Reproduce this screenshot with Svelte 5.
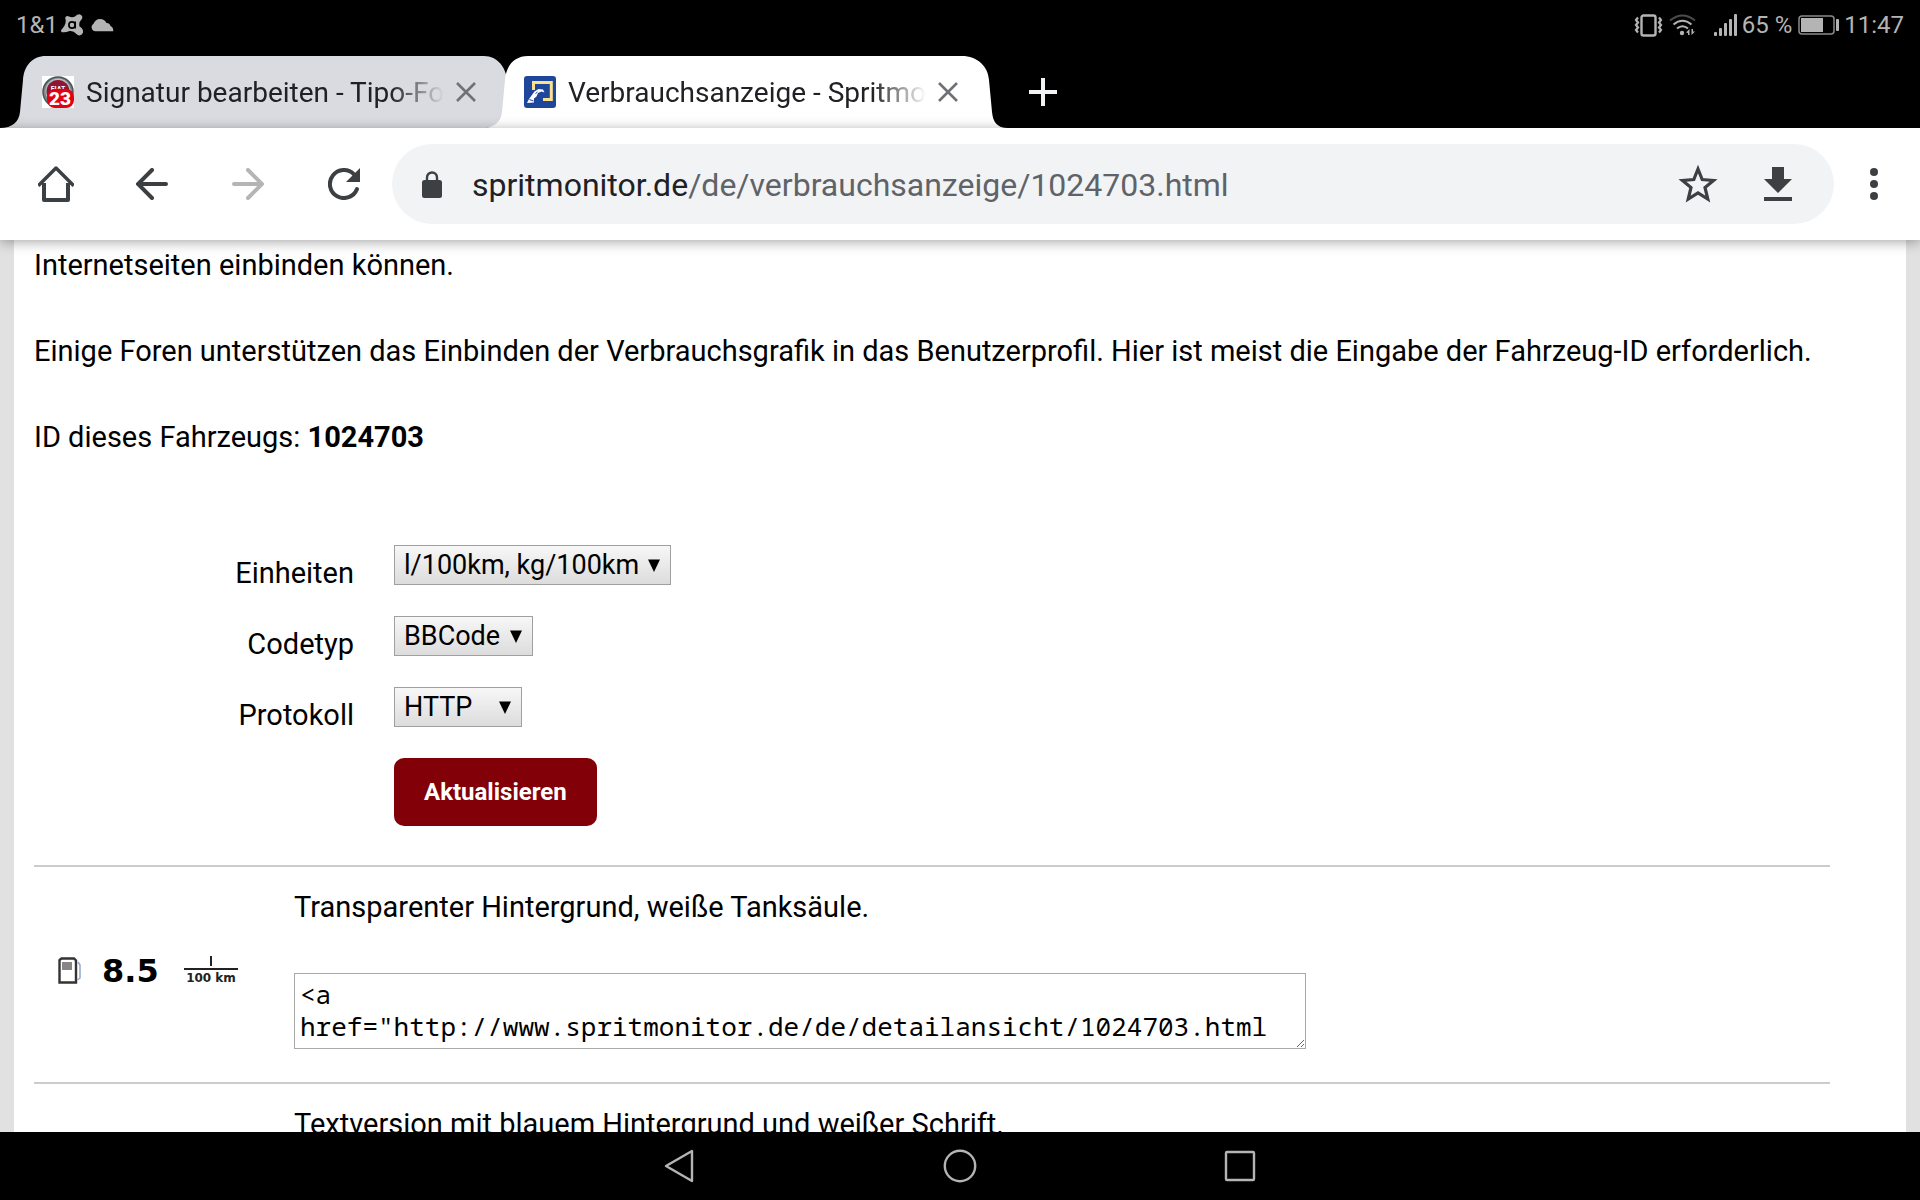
<script>
  let units = $state('l/100km, kg/100km');
  let codeType = $state('BBCode');
  let protocol = $state('HTTP');

  const snippet =
    '<a href="http://www.spritmonitor.de/de/detailansicht/1024703.html" target="_blank">Spritmonitor.de</a>';
</script>

{#snippet closeIcon()}
  <svg width="20" height="20" viewBox="0 0 20 20" fill="none" stroke="#6e7175" stroke-width="2.6">
    <path d="M1 1 19 19M19 1 1 19" />
  </svg>
{/snippet}

{#snippet arrow()}
  <svg class="arrow" width="12" height="13" viewBox="0 0 12 13"><path d="M0 .5H12L6 13Z" /></svg>
{/snippet}

<div class="screen">
  <header class="status">
    <div class="group">
      <span>1&amp;1</span>
      <svg class="avast" width="23" height="23" viewBox="0 0 23 23">
        <path
          fill="#b4b4b4"
          d="M5 2.5Q6 1.5 8 2.5Q11 4 14 2.6Q16 .2 18.500 .2A3.200 3.200 0 0 1 20.500 5.500Q17.500 8 18.500 12.500Q22.500 14.500 22 18.500A3.700 3.700 0 0 1 15.500 20Q12.500 16.500 8.500 17Q5 18.600 1.800 18.300A1.500 1.500 0 0 1 .7 15.600Q4 12 4.500 9Q5 6 4.300 4.500Q4 3.300 5 2.500Z"
        />
        <circle cx="11" cy="11" r="3.100" fill="none" stroke="#000" stroke-width="1.700" />
        <path d="M14.200 7.500V14.500" stroke="#000" stroke-width="1.700" />
      </svg>
      <svg width="23" height="14" viewBox="0 0 23 14">
        <path
          fill="#b4b4b4"
          d="M4.500 13.200A4 4 0 0 1 2.500 5.800Q4.500 1 9 1Q13.500 1 15.500 5Q18.500 4.800 19.500 8Q22.300 9 22.300 13.200Z"
        />
      </svg>
    </div>
    <div class="group">
      <svg width="29" height="23" viewBox="0 0 29 23" fill="none" stroke="#b4b4b4">
        <rect x="7.500" y="1.500" width="14" height="20" rx="2" stroke-width="2.400" />
        <path
          stroke-width="2.200"
          d="M4 3.500 2 6 4 8.500 2 11 4 13.500 2 16 4 18.500M25 3.500 27 6 25 8.500 27 11 25 13.500 27 16 25 18.500"
        />
      </svg>
      <svg class="wifi" width="27" height="23" viewBox="0 0 27 23" fill="none" stroke="#b4b4b4" stroke-width="2">
        <path stroke="#4c4c4c" d="M1 6.500Q13.500-3.500 26 6.500" />
        <path d="M4.500 10.500Q13.500 3 22.500 10.500M8 14.500Q13.500 10 19 14.500" />
        <circle cx="13" cy="19" r="2.200" fill="#b4b4b4" stroke="none" />
        <path fill="#b4b4b4" stroke="none" d="M20.500 15V21H19V19L17 18.500ZM22.500 15V21L26 17.500H24V15Z" />
      </svg>
      <svg width="24" height="23" viewBox="0 0 24 23" fill="#b4b4b4">
        <rect x="0" y="18" width="3" height="4" rx="1" />
        <rect x="5" y="14" width="3" height="8" rx="1" />
        <rect x="10" y="9" width="3" height="13" rx="1" />
        <rect x="15" y="5" width="3" height="17" rx="1" />
        <rect x="20" y="0" width="3" height="22" rx="1" />
      </svg>
      <span class="percent">65 %</span>
      <svg class="battery" width="41" height="20" viewBox="0 0 41 20">
        <rect x="1" y="1" width="35" height="18" rx="3" fill="none" stroke="#8a8a8a" stroke-width="1.500" />
        <rect x="3" y="3" width="22" height="14" fill="#b4b4b4" />
        <rect x="38" y="4" width="3" height="12" rx="1" fill="#b4b4b4" />
      </svg>
      <span>11:47</span>
    </div>
  </header>

  <nav class="tabs" aria-label="Tabs">
    <div class="tab">
      <svg class="shape" viewBox="0 0 512 72" preserveAspectRatio="none" fill="#dadbe0">
        <path d="M0 72C12 72 19 66 20 56L23 24C24 10 32 0 46 0H484C498 0 506 12 507 24L504 56C503 66 496 72 484 72Z" />
      </svg>
      <div class="tab-body">
        <svg class="favicon" width="32" height="32" viewBox="0 0 32 32">
          <rect width="32" height="32" fill="#fff" />
          <circle cx="16" cy="16" r="15" fill="#7c8789" stroke="#4a5557" stroke-width="1.500" />
          <circle cx="16" cy="15" r="12.500" fill="#b9c4c6" />
          <circle cx="16" cy="15.500" r="11.500" fill="#8e1533" />
          <text x="16" y="15" text-anchor="middle" class="fiat">FIAT</text>
          <rect x="5" y="13" width="27" height="19" rx="8" fill="#e30010" />
          <text x="18" y="29" text-anchor="middle" class="count">23</text>
        </svg>
        <span class="title">Signatur bearbeiten - Tipo-Forum</span>
        <button aria-label="Tab schließen">{@render closeIcon()}</button>
      </div>
    </div>
    <div class="tab active">
      <svg class="shape" viewBox="0 0 518 72" preserveAspectRatio="none" fill="#fff">
        <path d="M0 72C12 72 19 66 20 56L23 24C24 10 32 0 46 0H480C495 0 506 10 507 24L510 56C511 66 515 72 526 72Z" />
      </svg>
      <div class="tab-body">
        <svg class="favicon" width="32" height="32" viewBox="0 0 32 32">
          <rect width="32" height="32" rx="3" fill="#1e479b" />
          <path d="M9.500 14V6.500H27.300V23.500H19" fill="none" stroke="#fbe08e" stroke-width="3" />
          <path d="M3 27 5 23 10.500 15.500 14.500 13 19 13.500 20.500 16.500 17.500 15.500 14 17 12.500 20.500 10 22.500V26.500Z" fill="#fff" />
          <path d="M5.500 23.500 9.500 25M11.500 17.500 13.500 16" stroke="#1e479b" stroke-width="1" />
        </svg>
        <span class="title">Verbrauchsanzeige - Spritmonitor</span>
        <button aria-label="Tab schließen">{@render closeIcon()}</button>
      </div>
    </div>
    <button class="new-tab" aria-label="Neuer Tab">
      <svg width="28" height="28" viewBox="0 0 28 28" stroke="#f1f3f4" stroke-width="4">
        <path d="M14 0V28M0 14H28" />
      </svg>
    </button>
  </nav>

  <div class="toolbar">
    <button aria-label="Startseite">
      <svg width="36" height="36" viewBox="0 0 36 36" fill="none" stroke="#3c4043" stroke-width="4" stroke-linejoin="round">
        <path d="M6 17V34H30V17" />
        <path d="M1.500 18.500 18 2 34.500 18.500" stroke-linecap="square" stroke-width="3.500" />
      </svg>
    </button>
    <button aria-label="Zurück">
      <svg width="32" height="32" viewBox="0 0 32 32" fill="none" stroke="#3c4043" stroke-width="4" stroke-linecap="round">
        <path d="M30 16H3M16 2 2 16 16 30" />
      </svg>
    </button>
    <button aria-label="Vorwärts" disabled>
      <svg width="32" height="32" viewBox="0 0 32 32" fill="none" stroke="#b4b5b7" stroke-width="4" stroke-linecap="round">
        <path d="M2 16H29M16 2 30 16 16 30" />
      </svg>
    </button>
    <button aria-label="Neu laden">
      <svg width="32" height="32" viewBox="0 0 32 32" fill="none" stroke="#3c4043" stroke-width="4">
        <path d="M29 21A14 14 0 1 1 26 6.300" stroke-linecap="round" />
        <path d="M32 0V14H18Z" fill="#3c4043" stroke="none" />
      </svg>
    </button>
    <div class="omnibox">
      <svg width="20" height="27" viewBox="0 0 20 27">
        <rect y="9" width="20" height="18" rx="2.500" fill="#3c4043" />
        <path d="M5 10V6.500A5 5 0 0 1 15 6.500V10" fill="none" stroke="#3c4043" stroke-width="2.400" />
      </svg>
      <a class="url" href="#top">spritmonitor.de<span>/de/verbrauchsanzeige/1024703.html</span></a>
      <button aria-label="Lesezeichen">
        <svg width="40" height="38" viewBox="0 0 40 38" fill="none" stroke="#3c4043" stroke-width="3.200">
          <path d="M20 4 24.200 14.500 35.500 15.500 27 22.500 29.800 34 20 28 10.200 34 13 22.500 4.500 15.500 15.800 14.500Z" />
        </svg>
      </button>
      <button aria-label="Herunterladen">
        <svg width="28" height="34" viewBox="0 0 28 34" fill="#3c4043">
          <path d="M8 0H20V12H28L14 26 0 12H8ZM0 30H28V34H0Z" />
        </svg>
      </button>
    </div>
    <button class="menu" aria-label="Menü">
      <svg width="8" height="32" viewBox="0 0 8 32" fill="#3c4043">
        <circle cx="4" cy="4" r="4" /><circle cx="4" cy="16" r="4" /><circle cx="4" cy="28" r="4" />
      </svg>
    </button>
  </div>

  <main>
    <div class="page">
      <p>Internetseiten einbinden können.</p>
      <p>
        Einige Foren unterstützen das Einbinden der Verbrauchsgrafik in das Benutzerprofil. Hier ist meist die
        Eingabe der Fahrzeug-ID erforderlich.
      </p>
      <p>ID dieses Fahrzeugs: <b>1024703</b></p>

      <form onsubmit={(e) => e.preventDefault()}>
        <label for="units">Einheiten</label>
        <div class="select units">
          <select id="units" bind:value={units}>
            <option>l/100km, kg/100km</option>
            <option>mpg (US)</option>
          </select>
          {@render arrow()}
        </div>
        <label for="code">Codetyp</label>
        <div class="select code">
          <select id="code" bind:value={codeType}>
            <option>BBCode</option>
            <option>HTML</option>
          </select>
          {@render arrow()}
        </div>
        <label for="protocol">Protokoll</label>
        <div class="select protocol">
          <select id="protocol" bind:value={protocol}>
            <option>HTTP</option>
            <option>HTTPS</option>
          </select>
          {@render arrow()}
        </div>
        <button class="submit">Aktualisieren</button>
      </form>

      <section>
        <svg class="badge" height="34" viewBox="-20 0 204 34">
          <path d="M5.500 28.500V6L7.500 4.500H20L22 6.500V28.500Z" fill="#fff" stroke="#333" stroke-width="2.400" />
          <rect x="8" y="8" width="10" height="8" fill="#868686" />
          <path d="M24 8 26 11V24L23.500 26" fill="none" stroke="#8fa9cc" stroke-width="1.500" />
          <text x="48" y="28" class="value">8.5</text>
          <rect x="156" y="2" width="2" height="10" fill="#222" />
          <rect x="130" y="14" width="54" height="2" fill="#222" />
          <text x="157" y="28" text-anchor="middle" class="unit">100 km</text>
        </svg>
        <div class="entry">
          <label for="snippet1">Transparenter Hintergrund, weiße Tanksäule.</label>
          <textarea id="snippet1" rows="2" readonly value={snippet}></textarea>
        </div>
      </section>
      <section>
        <div class="badge"></div>
        <div class="entry">
          <label for="snippet2">Textversion mit blauem Hintergrund und weißer Schrift.</label>
          <textarea id="snippet2" rows="2" readonly value={snippet}></textarea>
        </div>
      </section>
    </div>
  </main>

  <footer>
    <button aria-label="Zurück">
      <svg width="34" height="36" viewBox="0 0 34 36" fill="none" stroke="#b4b4b4" stroke-width="2.400" stroke-linejoin="round">
        <path d="M29 3V33L3 18Z" />
      </svg>
    </button>
    <button aria-label="Startbildschirm">
      <svg width="34" height="34" viewBox="0 0 34 34" fill="none" stroke="#b4b4b4" stroke-width="2.400">
        <circle cx="17" cy="17" r="15.200" />
      </svg>
    </button>
    <button aria-label="Übersicht">
      <svg width="34" height="34" viewBox="0 0 34 34" fill="none" stroke="#b4b4b4" stroke-width="2.400">
        <rect x="3" y="3" width="28" height="28" rx="1" />
      </svg>
    </button>
  </footer>
</div>

<style>
  :global(body) {
    margin: 0;
    background: #000;
  }
  .screen {
    display: flex;
    flex-direction: column;
    height: 100vh;
    overflow: hidden;
    background: #000;
    color: #000;
    font-family: Roboto, sans-serif;
    font-size: 28px;
  }
  svg {
    display: block;
    flex: none;
  }
  button {
    display: flex;
    align-items: center;
    justify-content: center;
    padding: 0;
    border: 0;
    background: none;
    font: inherit;
  }
  .status {
    display: flex;
    justify-content: space-between;
    flex: none;
    height: 56px;
    padding: 0 16px;
    box-sizing: border-box;
    color: #b4b4b4;
    font-size: 24px;
    line-height: 50px;
  }
  .group {
    display: flex;
    align-items: center;
    height: 50px;
  }
  .avast {
    margin: 0 7px 0 3px;
  }
  .wifi {
    margin: 0 18px 0 6px;
  }
  .percent {
    margin: 0 6px 0 4px;
  }
  .battery {
    margin-right: 5px;
  }
  .tabs {
    display: flex;
    flex: none;
    height: 72px;
  }
  .tab {
    position: relative;
    width: 512px;
  }
  .tab.active {
    width: 518px;
    margin-left: -30px;
  }
  .shape {
    position: absolute;
    inset: 0;
    width: 100%;
    height: 100%;
    overflow: visible;
  }
  .tab-body {
    position: relative;
    display: flex;
    align-items: center;
    height: 72px;
    padding: 0 36px 0 42px;
  }
  .tab.active .tab-body {
    padding-right: 42px;
  }
  .title {
    flex: 1;
    margin: 0 12px;
    padding-top: 2px;
    overflow: hidden;
    color: #202124;
    line-height: 40px;
    white-space: nowrap;
    mask-image: linear-gradient(to right, #000 85%, transparent);
  }
  .fiat {
    fill: #fff;
    font-size: 7px;
    font-weight: 700;
  }
  .count {
    fill: #fff;
    font-size: 19px;
    font-weight: 900;
  }
  .new-tab {
    width: 48px;
    margin-left: 19px;
  }
  .toolbar {
    position: relative;
    z-index: 1;
    display: flex;
    align-items: center;
    flex: none;
    height: 112px;
    padding: 0 6px 0 8px;
    background: #fff;
    box-shadow: 0 2px 12px rgb(0 0 0 / 35%);
  }
  .toolbar > button {
    width: 96px;
    height: 96px;
  }
  .toolbar > .menu {
    width: 80px;
  }
  .omnibox {
    display: flex;
    align-items: center;
    flex: 1;
    height: 80px;
    padding: 0 42px 0 30px;
    border-radius: 40px;
    background: #f1f3f5;
  }
  .url {
    flex: 1;
    margin-left: 30px;
    padding-top: 2px;
    color: #202124;
    font-size: 32px;
    text-decoration: none;
  }
  .url span {
    color: #5f6368;
  }
  .omnibox button + button {
    margin-left: 46px;
  }
  main {
    flex: 1;
    min-height: 0;
    overflow: hidden;
    padding: 0 14px;
    background: #e1e1e1;
  }
  .page {
    height: 100%;
    padding: 4px 76px 0 20px;
    box-sizing: border-box;
    background: #fff;
    font-size: 29px;
    line-height: 43px;
  }
  p {
    margin: 0 0 43px;
  }
  form {
    display: grid;
    grid-template-columns: 320px 1fr;
    column-gap: 40px;
    row-gap: 28px;
    align-items: center;
    margin: 86px 0 39px;
  }
  form label {
    padding-top: 14px;
    text-align: right;
    line-height: 29px;
  }
  .select {
    display: grid;
    align-items: center;
    height: 40px;
    margin-bottom: 3px;
  }
  .select > :global(*) {
    grid-area: 1 / 1;
  }
  .units {
    width: 277px;
  }
  .code {
    width: 139px;
  }
  .protocol {
    width: 128px;
  }
  select {
    width: 100%;
    height: 40px;
    padding: 0 9px;
    border: 1px solid #a0a0a0;
    border-radius: 0;
    appearance: none;
    background: linear-gradient(#f7f7f7, #dcdcdc);
    color: #000;
    font-family: inherit;
    font-size: 27px;
  }
  .arrow {
    justify-self: end;
    margin-right: 11px;
    pointer-events: none;
  }
  .submit {
    grid-column: 2;
    justify-self: start;
    height: 68px;
    padding: 0 30px;
    border-radius: 10px;
    background: #820008;
    color: #fff;
    font-size: 24px;
    font-weight: 700;
  }
  section {
    display: flex;
    align-items: center;
    gap: 56px;
    padding: 19px 0 33px;
    border-top: 2px solid #ccc;
  }
  .badge {
    width: 204px;
    margin-top: 6px;
  }
  .value {
    font-family: "DejaVu Sans", sans-serif;
    font-size: 32px;
    font-weight: 700;
  }
  .unit {
    font-family: "DejaVu Sans", sans-serif;
    font-size: 12px;
    font-weight: 700;
    fill: #222;
  }
  .entry {
    display: flex;
    flex: 1;
    flex-direction: column;
    gap: 44px;
  }
  textarea {
    width: 1012px;
    max-width: 100%;
    height: 76px;
    padding: 4px 30px 4px 5px;
    box-sizing: border-box;
    border: 1px solid #a9a9a9;
    overflow: hidden;
    background: #fff;
    color: #000;
    font-family: "Noto Sans Mono", "DejaVu Sans Mono", monospace;
    font-size: 26px;
    line-height: 32px;
  }
  footer {
    display: flex;
    align-items: center;
    justify-content: center;
    gap: 246px;
    flex: none;
    height: 68px;
  }
</style>
